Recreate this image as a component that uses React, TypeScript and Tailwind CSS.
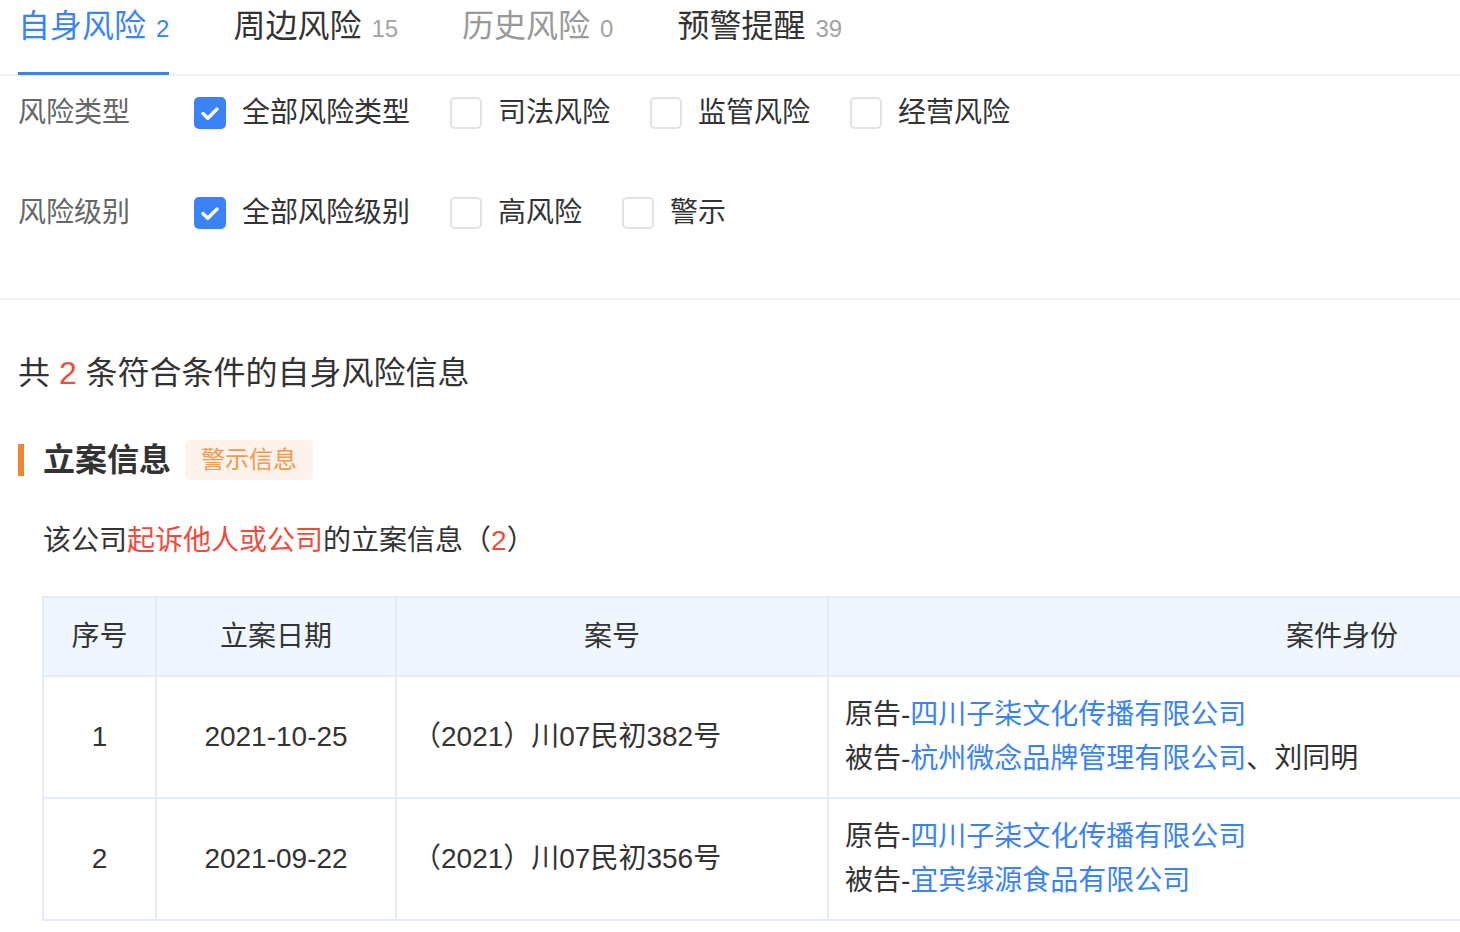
const font = "font-['Liberation_Sans','Noto_Sans_CJK_SC',sans-serif]";

const tabs = [
  { name: "自身风险", count: 2, state: "active" },
  { name: "周边风险", count: 15, state: "normal" },
  { name: "历史风险", count: 0, state: "disabled" },
  { name: "预警提醒", count: 39, state: "normal" },
];

const Checkbox = ({ checked }: { checked?: boolean }) =>
  checked ? (
    <span className="flex h-[32px] w-[32px] shrink-0 items-center justify-center rounded-[5px] bg-[#3b82f6]">
      <svg width="32" height="32" viewBox="0 0 32 32" fill="none">
        <path
          d="M9 16.5l4.8 4.8L23 12"
          stroke="white"
          strokeWidth="3.4"
          strokeLinecap="round"
          strokeLinejoin="round"
        />
      </svg>
    </span>
  ) : (
    <span className="h-[32px] w-[32px] shrink-0 rounded-[5px] border-2 border-[#e3e3e3] bg-white" />
  );

const FilterRow = ({
  label,
  options,
}: {
  label: string;
  options: { text: string; checked?: boolean }[];
}) => (
  <div className="flex h-[72px] items-center pt-[2px]">
    <div className="w-[176px] text-[28px] leading-[40px] text-[#666]">{label}</div>
    <div className="flex items-center gap-[40px]">
      {options.map((o) => (
        <label key={o.text} className="flex items-center gap-[16px]">
          <Checkbox checked={o.checked} />
          <span className="text-[28px] leading-[40px] text-[#333]">{o.text}</span>
        </label>
      ))}
    </div>
  </div>
);

const rows = [
  {
    no: 1,
    date: "2021-10-25",
    caseNo: "（2021）川07民初382号",
    plaintiff: ["四川子柒文化传播有限公司"],
    defendant: ["杭州微念品牌管理有限公司"],
    extra: "、刘同明",
  },
  {
    no: 2,
    date: "2021-09-22",
    caseNo: "（2021）川07民初356号",
    plaintiff: ["四川子柒文化传播有限公司"],
    defendant: ["宜宾绿源食品有限公司"],
    extra: "",
  },
];

export default function App() {
  return (
    <div className={`${font} w-full overflow-hidden bg-white text-[#333]`}>
      {/* tabs */}
      <div className="flex h-[76px] gap-[64px] border-b-2 border-[#f2f2f2] pl-[18px]">
        {tabs.map((t) => (
          <div key={t.name} className="relative flex items-baseline pt-[6px]">
            <span
              className={`text-[32px] leading-[40px] ${
                t.state === "active"
                  ? "text-[#3a83f5]"
                  : t.state === "disabled"
                    ? "text-[#999]"
                    : "text-[#333]"
              }`}
            >
              {t.name}
            </span>
            <span
              className={`ml-[10px] text-[24px] ${
                t.state === "active" ? "text-[#3a83f5]" : "text-[#a3a3a3]"
              }`}
            >
              {t.count}
            </span>
            {t.state === "active" && (
              <span className="absolute -bottom-px left-0 right-0 h-[3px] bg-[#3a83f5]" />
            )}
          </div>
        ))}
      </div>

      {/* filters */}
      <div className="flex flex-col gap-[28px] border-b-2 border-[#f2f2f2] pb-[50px] pl-[18px]">
        <FilterRow
          label="风险类型"
          options={[
            { text: "全部风险类型", checked: true },
            { text: "司法风险" },
            { text: "监管风险" },
            { text: "经营风险" },
          ]}
        />
        <FilterRow
          label="风险级别"
          options={[
            { text: "全部风险级别", checked: true },
            { text: "高风险" },
            { text: "警示" },
          ]}
        />
      </div>

      {/* summary */}
      <div className="pl-[18px]">
        <div className="mt-[51px] text-[32px] leading-[44px] text-[#333]">
          共 <span className="text-[#f04b3b]">2</span> 条符合条件的自身风险信息
        </div>

        <div className="mt-[45px] flex h-[40px] items-center">
          <span className="h-[32px] w-[6px] bg-[#ef8433]" />
          <span className="ml-[19px] text-[32px] font-bold leading-[40px] text-[#333]">
            立案信息
          </span>
          <span className="ml-[14px] flex h-[40px] items-center rounded-[5px] bg-[#fdf3ec] px-[16px] text-[24px] text-[#f39a4d]">
            警示信息
          </span>
        </div>

        <div className="mt-[41px] pl-[25px] text-[28px] leading-[40px] text-[#333]">
          该公司<span className="text-[#f04b3b]">起诉他人或公司</span>的立案信息（
          <span className="text-[#f04b3b]">2</span>）
        </div>

        <div className="mt-[35px] pl-[24px]">
          <table className="w-[1813px] table-fixed border-collapse border-2 border-[#e4edf7] text-[28px] text-[#333]">
            <colgroup>
              <col className="w-[113px]" />
              <col className="w-[240px]" />
              <col className="w-[432px]" />
              <col className="w-[1028px]" />
            </colgroup>
            <thead>
              <tr className="h-[79px] bg-[#f0f6fe]">
                <th className="border-2 border-[#e4edf7] font-normal">序号</th>
                <th className="border-2 border-[#e4edf7] font-normal">立案日期</th>
                <th className="border-2 border-[#e4edf7] font-normal">案号</th>
                <th className="border-2 border-[#e4edf7] font-normal">案件身份</th>
              </tr>
            </thead>
            <tbody>
              {rows.map((r) => (
                <tr key={r.no} className="h-[122px]">
                  <td className="border-2 border-[#e4edf7] text-center">{r.no}</td>
                  <td className="border-2 border-[#e4edf7] text-center">{r.date}</td>
                  <td className="border-2 border-[#e4edf7] pl-[16px]">{r.caseNo}</td>
                  <td className="border-2 border-[#e4edf7] pl-[16px] leading-[44px]">
                    <div>
                      原告-<span className="text-[#3a83f5]">{r.plaintiff.join("、")}</span>
                    </div>
                    <div>
                      被告-<span className="text-[#3a83f5]">{r.defendant.join("、")}</span>
                      {r.extra}
                    </div>
                  </td>
                </tr>
              ))}
            </tbody>
          </table>
        </div>
      </div>
      <div className="h-[20px]" />
    </div>
  );
}
